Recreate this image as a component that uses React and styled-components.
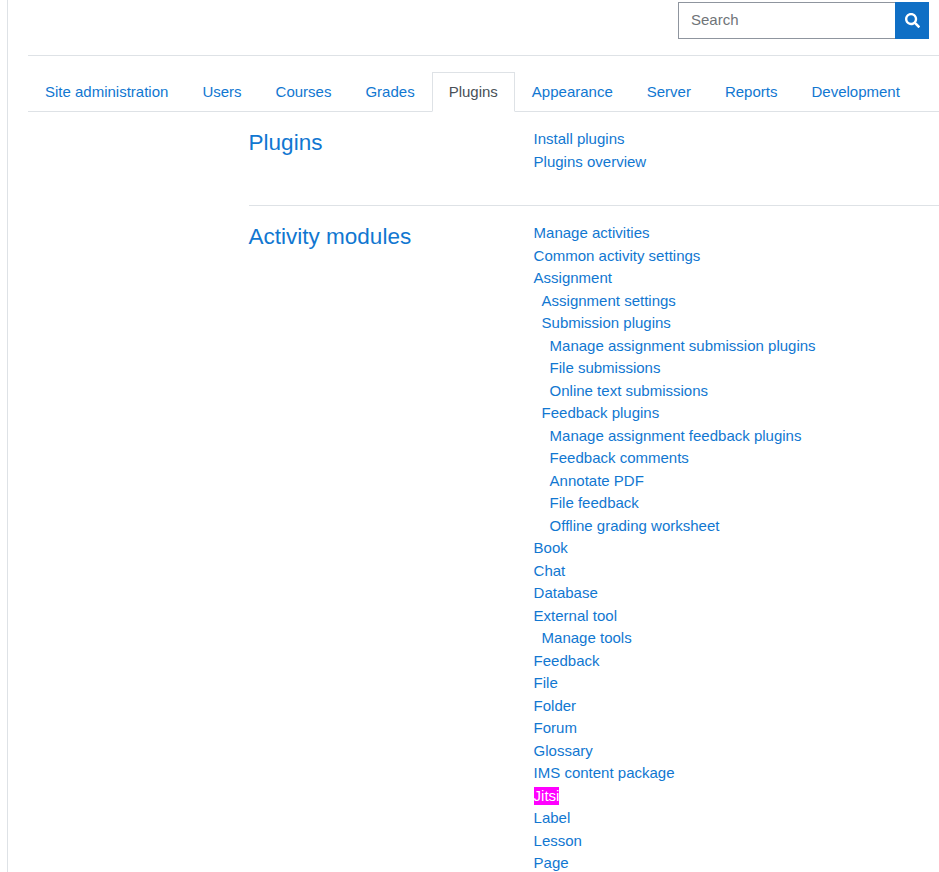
import React from 'react'
import styled, { createGlobalStyle } from 'styled-components'
import { FaSearch } from 'react-icons/fa'

const GlobalStyle = createGlobalStyle`
  html, body {
    margin: 0;
    height: 872px;
    overflow: hidden;
    background: #fff;
  }
  body {
    font-family: "Liberation Sans", Arial, sans-serif;
    font-size: 15px;
    line-height: 22.5px;
    color: #373a3c;
  }
  * {
    box-sizing: border-box;
  }
`

const Page = styled.div`
  margin-left: 7px;
  padding-left: 20px;
  border-left: 1px solid #dee2e6;
  height: 872px;
  overflow: hidden;
`

const Header = styled.header`
  display: flex;
  justify-content: flex-end;
  height: 56px;
  padding: 2px 10px 0 0;
  border-bottom: 1px solid #dee2e6;
`

const SearchForm = styled.form`
  display: flex;
  width: 251px;
  height: 37px;
`

const SearchInput = styled.input`
  flex: 1;
  min-width: 0;
  padding: 0 12px;
  border: 1px solid #8f959e;
  border-right: 0;
  border-radius: 0;
  outline: none;
  font: inherit;
  color: #495057;

  &::placeholder {
    color: #6f7478;
    opacity: 1;
  }
`

const SearchButton = styled.button`
  display: flex;
  align-items: center;
  justify-content: center;
  width: 34px;
  padding: 0;
  border: 0;
  background: #0f6fc5;
  color: #fff;
  font-size: 15px;
`

const Tabs = styled.nav`
  display: flex;
  height: 56px;
  padding-top: 16px;
  border-bottom: 1px solid #dee2e6;
`

const Tab = styled.a`
  display: block;
  height: 40px;
  padding: 8px 16px;
  border: 1px solid ${({ $active }) => ($active ? '#dee2e6' : 'transparent')};
  border-bottom-color: ${({ $active }) => ($active ? '#fff' : 'transparent')};
  background: ${({ $active }) => ($active ? '#fff' : 'transparent')};
  color: ${({ $active }) => ($active ? '#495057' : '#1177d1')};
  white-space: nowrap;
  text-decoration: none;
`

const Sections = styled.main`
  padding-left: 220.6px;
`

const Section = styled.section`
  display: flex;
  padding-top: 16px;
  padding-bottom: ${({ $last }) => ($last ? '0' : '32px')};
  border-bottom: ${({ $last }) => ($last ? '0' : '1px solid #dee2e6')};
`

const SectionTitle = styled.h3`
  width: 285px;
  flex: none;
  margin: 1px 0 0;
  font-size: 22.5px;
  font-weight: 400;
  line-height: 27px;
  color: #1177d1;
`

const LinkList = styled.ul`
  margin: 0;
  padding: 0;
  list-style: none;
`

const LinkItem = styled.li`
  padding-left: ${({ $level }) => $level * 8}px;
  height: 22.5px;
  white-space: nowrap;
`

const ItemLink = styled.a`
  color: #1177d1;
  text-decoration: none;
`

const Highlight = styled(ItemLink)`
  padding-bottom: 1px;
  background: #f0f;
  color: #fff;
`

const tabs = [
  'Site administration',
  'Users',
  'Courses',
  'Grades',
  'Plugins',
  'Appearance',
  'Server',
  'Reports',
  'Development',
]

const pluginLinks = [
  ['Install plugins', 0],
  ['Plugins overview', 0],
]

const activityLinks = [
  ['Manage activities', 0],
  ['Common activity settings', 0],
  ['Assignment', 0],
  ['Assignment settings', 1],
  ['Submission plugins', 1],
  ['Manage assignment submission plugins', 2],
  ['File submissions', 2],
  ['Online text submissions', 2],
  ['Feedback plugins', 1],
  ['Manage assignment feedback plugins', 2],
  ['Feedback comments', 2],
  ['Annotate PDF', 2],
  ['File feedback', 2],
  ['Offline grading worksheet', 2],
  ['Book', 0],
  ['Chat', 0],
  ['Database', 0],
  ['External tool', 0],
  ['Manage tools', 1],
  ['Feedback', 0],
  ['File', 0],
  ['Folder', 0],
  ['Forum', 0],
  ['Glossary', 0],
  ['IMS content package', 0],
  ['Jitsi', 0],
  ['Label', 0],
  ['Lesson', 0],
  ['Page', 0],
]

function Links({ items }) {
  return (
    <LinkList>
      {items.map(([label, level]) => {
        const Anchor = label === 'Jitsi' ? Highlight : ItemLink
        return (
          <LinkItem key={label} $level={level}>
            <Anchor href="#">{label}</Anchor>
          </LinkItem>
        )
      })}
    </LinkList>
  )
}

export default function App() {
  return (
    <>
      <GlobalStyle />
      <Page>
        <Header>
          <SearchForm onSubmit={(e) => e.preventDefault()}>
            <SearchInput placeholder="Search" />
            <SearchButton aria-label="Search">
              <FaSearch />
            </SearchButton>
          </SearchForm>
        </Header>
        <Tabs>
          {tabs.map((tab) => (
            <Tab key={tab} href="#" $active={tab === 'Plugins'}>
              {tab}
            </Tab>
          ))}
        </Tabs>
        <Sections>
          <Section>
            <SectionTitle>Plugins</SectionTitle>
            <Links items={pluginLinks} />
          </Section>
          <Section $last>
            <SectionTitle>Activity modules</SectionTitle>
            <Links items={activityLinks} />
          </Section>
        </Sections>
      </Page>
    </>
  )
}
